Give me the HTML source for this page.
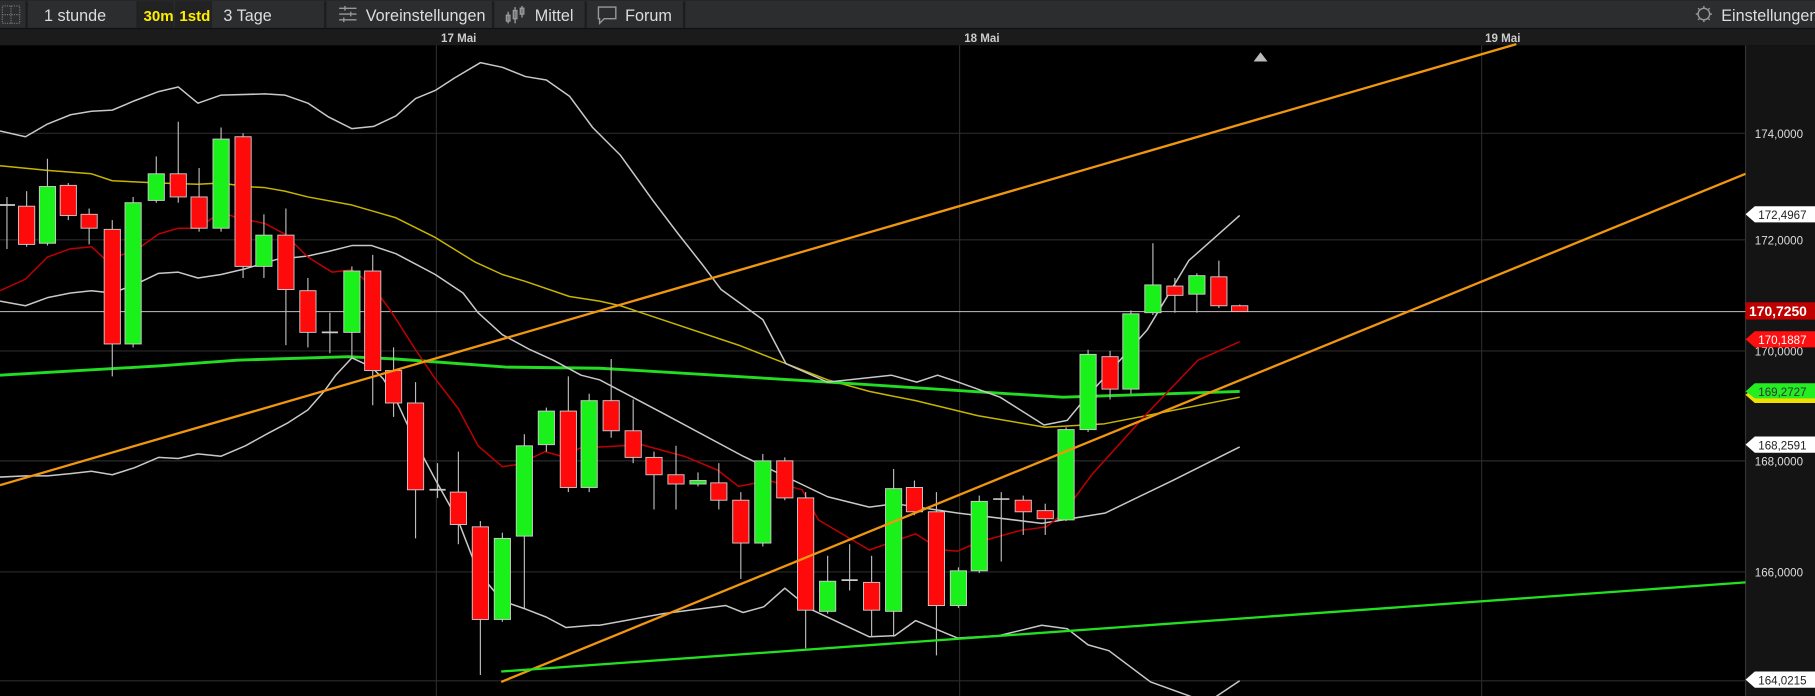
<!DOCTYPE html>
<html><head><meta charset="utf-8"><style>
html,body{margin:0;padding:0;background:#000;overflow:hidden}
svg{display:block}
text{font-family:"Liberation Sans",sans-serif}
</style></head><body>
<svg id="s" width="1815" height="696" viewBox="0 0 1568 601" xmlns="http://www.w3.org/2000/svg">
<rect width="1568" height="601" fill="#000"/>
<rect x="0" y="0" width="1568" height="25" fill="#2b2d2f"/>
<rect x="0" y="24" width="1568" height="1" fill="#111"/>
<g fill="none" stroke="#777" stroke-width="1" stroke-dasharray="1,1">
<rect x="2" y="5" width="15" height="15"/><line x1="9.5" y1="5" x2="9.5" y2="20"/><line x1="2" y1="12.5" x2="17" y2="12.5"/></g>
<g fill="#1c1d1e"><rect x="22" y="1" width="2" height="23"/><rect x="118" y="1" width="1" height="23"/><rect x="182" y="1" width="1" height="23"/><rect x="280" y="1" width="2" height="23"/><rect x="425" y="1" width="2" height="23"/><rect x="505" y="1" width="2" height="23"/><rect x="590" y="1" width="2" height="23"/></g>
<rect x="119" y="1" width="31" height="23" fill="#222"/>
<rect x="151" y="1" width="31" height="23" fill="#222"/>
<g font-size="14" fill="#ddd">
<text x="38" y="18">1 stunde</text>
<text x="124" y="18" fill="#ffee00" font-weight="bold" font-size="13">30m</text>
<text x="155" y="18" fill="#ffee00" font-weight="bold" font-size="13">1std</text>
<text x="193" y="18">3 Tage</text>
<text x="316" y="18">Voreinstellungen</text>
<text x="462" y="18">Mittel</text>
<text x="540" y="18">Forum</text>
<text x="1487" y="18">Einstellungen</text>
</g>
<g stroke="#999" stroke-width="1.2" fill="none">
<line x1="293" y1="7" x2="308" y2="7"/><line x1="293" y1="12" x2="308" y2="12"/><line x1="293" y1="17" x2="308" y2="17"/>
<line x1="298" y1="5" x2="298" y2="9"/><line x1="303" y1="10" x2="303" y2="14"/><line x1="297" y1="15" x2="297" y2="19"/>
<line x1="439" y1="10" x2="439" y2="20"/><rect x="437.5" y="13" width="3" height="5"/><line x1="445" y1="6" x2="445" y2="20"/><rect x="443.5" y="9" width="3" height="7"/><line x1="451" y1="5" x2="451" y2="15"/><rect x="449.5" y="7" width="3" height="5"/>
<path d="M517 6h15v10h-10l-4 4v-4h-1z"/>
<circle cx="1472" cy="12" r="5"/><path d="M1465 12h2M1477 12h2M1472 5v2M1472 17v2M1467 7l1 1M1476 16l1 1M1477 7l-1 1M1467 17l1-1"/>
</g>
<rect x="0" y="25" width="1568" height="14" fill="#1b1b1b"/>
<g font-size="10" fill="#ccc" font-weight="bold"><text x="381" y="36">17 Mai</text><text x="833" y="36">18 Mai</text><text x="1283" y="36">19 Mai</text></g>
<path d="M1083 53l6-8 6 8z" fill="#bbb"/>
<rect x="1508" y="39" width="60" height="562" fill="#141414"/>
<line x1="1508" y1="39" x2="1508" y2="601" stroke="#333"/>
<g stroke="#2a2a2a" stroke-width="1">
<line x1="0" y1="115" x2="1508" y2="115"/><line x1="0" y1="207" x2="1508" y2="207"/><line x1="0" y1="303" x2="1508" y2="303"/><line x1="0" y1="398" x2="1508" y2="398"/><line x1="0" y1="494" x2="1508" y2="494"/><line x1="0" y1="588" x2="1508" y2="588"/>
<line x1="377" y1="39" x2="377" y2="601"/><line x1="829" y1="39" x2="829" y2="601"/><line x1="1280" y1="39" x2="1280" y2="601"/>
</g>
<g font-size="10" fill="#ddd">
<text x="1516" y="119">174,0000</text><text x="1516" y="211">172,0000</text><text x="1516" y="307">170,0000</text><text x="1516" y="402">168,0000</text><text x="1516" y="498">166,0000</text>
</g>
<line x1="0" y1="269" x2="1508" y2="269" stroke="#aaa" stroke-width="1"/>
<g id="ind" fill="none" stroke-linejoin="round"></g>
<g id="cd"></g>
<g fill="none" stroke-width="2">
<line x1="0" y1="419" x2="1310" y2="38" stroke="#f0960f"/>
<line x1="433" y1="589" x2="1508" y2="150" stroke="#f0960f"/>
<line x1="433" y1="580" x2="1508" y2="503" stroke="#22e022"/>
</g>
<g font-size="10">
<path d="M1508 185l8-7h52v14h-52z" fill="#fff"/><text x="1519" y="189" fill="#222">172,4967</text>
<rect x="1508" y="261" width="60" height="15" fill="#c00000"/><text x="1511" y="273" fill="#fff" font-weight="bold" font-size="12">170,7250</text>
<path d="M1508 293l8-7h52v14h-52z" fill="#ff1010"/><text x="1519" y="297" fill="#fff">170,1887</text>
<path d="M1508 341l8-7h52v14h-52z" fill="#f0e000"/>
<path d="M1508 338l8-7h52v13h-52z" fill="#22ee22"/><text x="1519" y="342" fill="#333">169,2727</text>
<path d="M1508 384l8-7h52v14h-52z" fill="#fff"/><text x="1519" y="388" fill="#222">168,2591</text>
<path d="M1508 587l8-7h52v14h-52z" fill="#fff"/><text x="1519" y="591" fill="#222">164,0215</text>
</g>
</svg>
<script>
var NS="http://www.w3.org/2000/svg";
function pl(pts,col,w){var p=document.createElementNS(NS,"polyline");p.setAttribute("points",pts.map(function(a){return a.join(",")}).join(" "));p.setAttribute("stroke",col);p.setAttribute("stroke-width",w);p.setAttribute("fill","none");document.getElementById("ind").appendChild(p);}
pl([[0,143],[41,147],[79,150],[97,156],[137,158],[171,159],[191,158],[212,161],[229,162],[246,165],[266,170],[304,177],[342,188],[376,205],[410,226],[434,237],[454,243],[492,256],[518,260],[536,264],[638,298],[715,328],[751,338],[791,346],[845,359],[903,369],[954,366],[990,359],[1071,343]],"#c8b400",1.3);
pl([[0,324],[68,320],[137,316],[205,311],[301,308],[342,310],[437,317],[518,318],[536,319],[700,329],[918,343],[1071,338]],"#22dd22",2.5);
pl([[0,113],[22,118],[41,107],[61,99],[79,96],[97,95],[116,87],[137,79],[154,75],[171,89],[191,82],[229,81],[246,82],[266,89],[284,101],[304,111],[323,109],[342,100],[359,85],[376,78],[393,67],[415,54],[434,58],[454,66],[472,69],[492,83],[512,110],[536,134],[564,173],[586,202],[608,230],[623,250],[659,276],[679,314],[715,330],[770,324],[792,330],[810,324],[828,330],[864,343],[902,367],[922,363],[936,346],[973,305],[991,285],[1027,225],[1053,202],[1071,186]],"#c8c8c8",1.3);
pl([[0,260],[22,264],[41,257],[61,253],[79,251],[97,253],[116,246],[137,236],[154,235],[171,240],[191,237],[212,232],[239,224],[266,221],[284,217],[304,212],[321,212],[342,219],[359,228],[376,237],[400,253],[413,270],[434,289],[458,302],[478,311],[502,324],[518,328],[573,357],[642,394],[715,429],[751,438],[773,435],[827,443],[900,452],[955,443],[1013,415],[1071,386]],"#c8c8c8",1.3);
pl([[0,412],[22,411],[41,411],[61,409],[79,407],[97,410],[116,404],[137,395],[154,396],[171,392],[191,394],[212,385],[232,374],[249,365],[266,354],[280,338],[290,324],[304,309],[321,317],[331,327],[342,345],[359,382],[376,414],[396,450],[413,494],[434,519],[454,526],[472,533],[489,542],[512,540],[518,540],[573,530],[627,523],[642,529],[660,524],[678,508],[700,526],[751,550],[773,549],[791,536],[827,551],[863,549],[900,540],[922,543],[940,557],[958,562],[994,589],[1030,602],[1050,602],[1071,588]],"#c8c8c8",1.3);
pl([[0,251],[22,241],[41,222],[60,215],[79,213],[91,224],[116,217],[137,202],[154,197],[171,197],[191,183],[205,188],[229,193],[246,202],[266,222],[287,235],[304,233],[321,246],[338,269],[359,302],[376,327],[396,353],[413,385],[434,403],[448,401],[471,390],[485,394],[506,385],[518,386],[554,384],[591,394],[620,406],[638,420],[664,415],[693,423],[707,449],[751,475],[791,461],[802,468],[815,475],[827,476],[846,468],[882,458],[904,455],[918,444],[944,409],[991,357],[1035,311],[1071,295]],"#c00000",1.3);
var C=[[6,177,177,170,215,"d"],[23,178,211,165,213,"r"],[41,161,210,137,212,"g"],[59,160,186,158,190,"r"],[77,185,197,180,211,"r"],[97,198,297,190,325,"r"],[115,175,297,170,300,"g"],[135,150,173,135,175,"g"],[154,150,170,105,175,"r"],[172,170,197,145,200,"r"],[191,120,197,110,200,"g"],[210,118,230,115,240,"r"],[228,203,230,185,240,"g"],[247,203,250,180,298,"r"],[266,251,287,240,300,"r"],[285,287,287,270,305,"d"],[304,234,287,230,310,"g"],[322,234,320,220,350,"r"],[340,320,348,300,360,"r"],[359,348,423,330,465,"r"],[378,423,423,400,430,"d"],[396,425,453,390,470,"r"],[415,455,535,450,583,"r"],[434,465,535,460,537,"g"],[453,385,463,375,525,"g"],[472,355,384,352,390,"g"],[491,355,421,325,425,"r"],[509,346,421,340,425,"g"],[528,346,372,310,378,"r"],[547,372,395,345,400,"r"],[565,395,410,390,440,"r"],[584,410,418,385,440,"r"],[603,415,418,408,420,"g"],[621,417,432,400,440,"r"],[640,432,469,425,500,"r"],[659,398,469,392,472,"g"],[678,398,430,395,432,"r"],[696,430,527,425,560,"r"],[715,502,528,480,530,"g"],[734,501,501,470,510,"d"],[753,503,527,480,550,"r"],[772,422,528,405,550,"g"],[790,421,442,415,445,"r"],[809,442,523,425,566,"r"],[828,493,523,490,525,"g"],[846,433,493,428,495,"g"],[865,431,431,425,485,"d"],[884,432,442,428,462,"r"],[903,441,448,435,462,"r"],[921,371,449,369,450,"g"],[940,306,371,302,373,"g"],[959,308,336,303,345,"r"],[977,271,336,268,340,"g"],[996,246,270,210,272,"g"],[1015,247,255,240,270,"r"],[1034,238,254,236,270,"g"],[1053,239,264,225,266,"r"],[1071,264,269,263,269,"r"]];
var g=document.getElementById("cd"),h="";
C.forEach(function(c){var x=c[0],t=c[1],b=c[2];h+='<line x1="'+x+'" y1="'+c[3]+'" x2="'+x+'" y2="'+c[4]+'" stroke="#bbb" stroke-width="1"/>';
if(c[5]=="d"){h+='<line x1="'+(x-7)+'" y1="'+t+'" x2="'+(x+7)+'" y2="'+t+'" stroke="#ccc" stroke-width="1.5"/>';}
else{h+='<rect x="'+(x-7)+'" y="'+t+'" width="14" height="'+Math.max(2,b-t)+'" fill="'+(c[5]=="r"?"#ff0a0a":"#1af01a")+'" stroke="#ccc" stroke-width="0.8"/>';}});
g.innerHTML=h;
</script>
</body></html>
